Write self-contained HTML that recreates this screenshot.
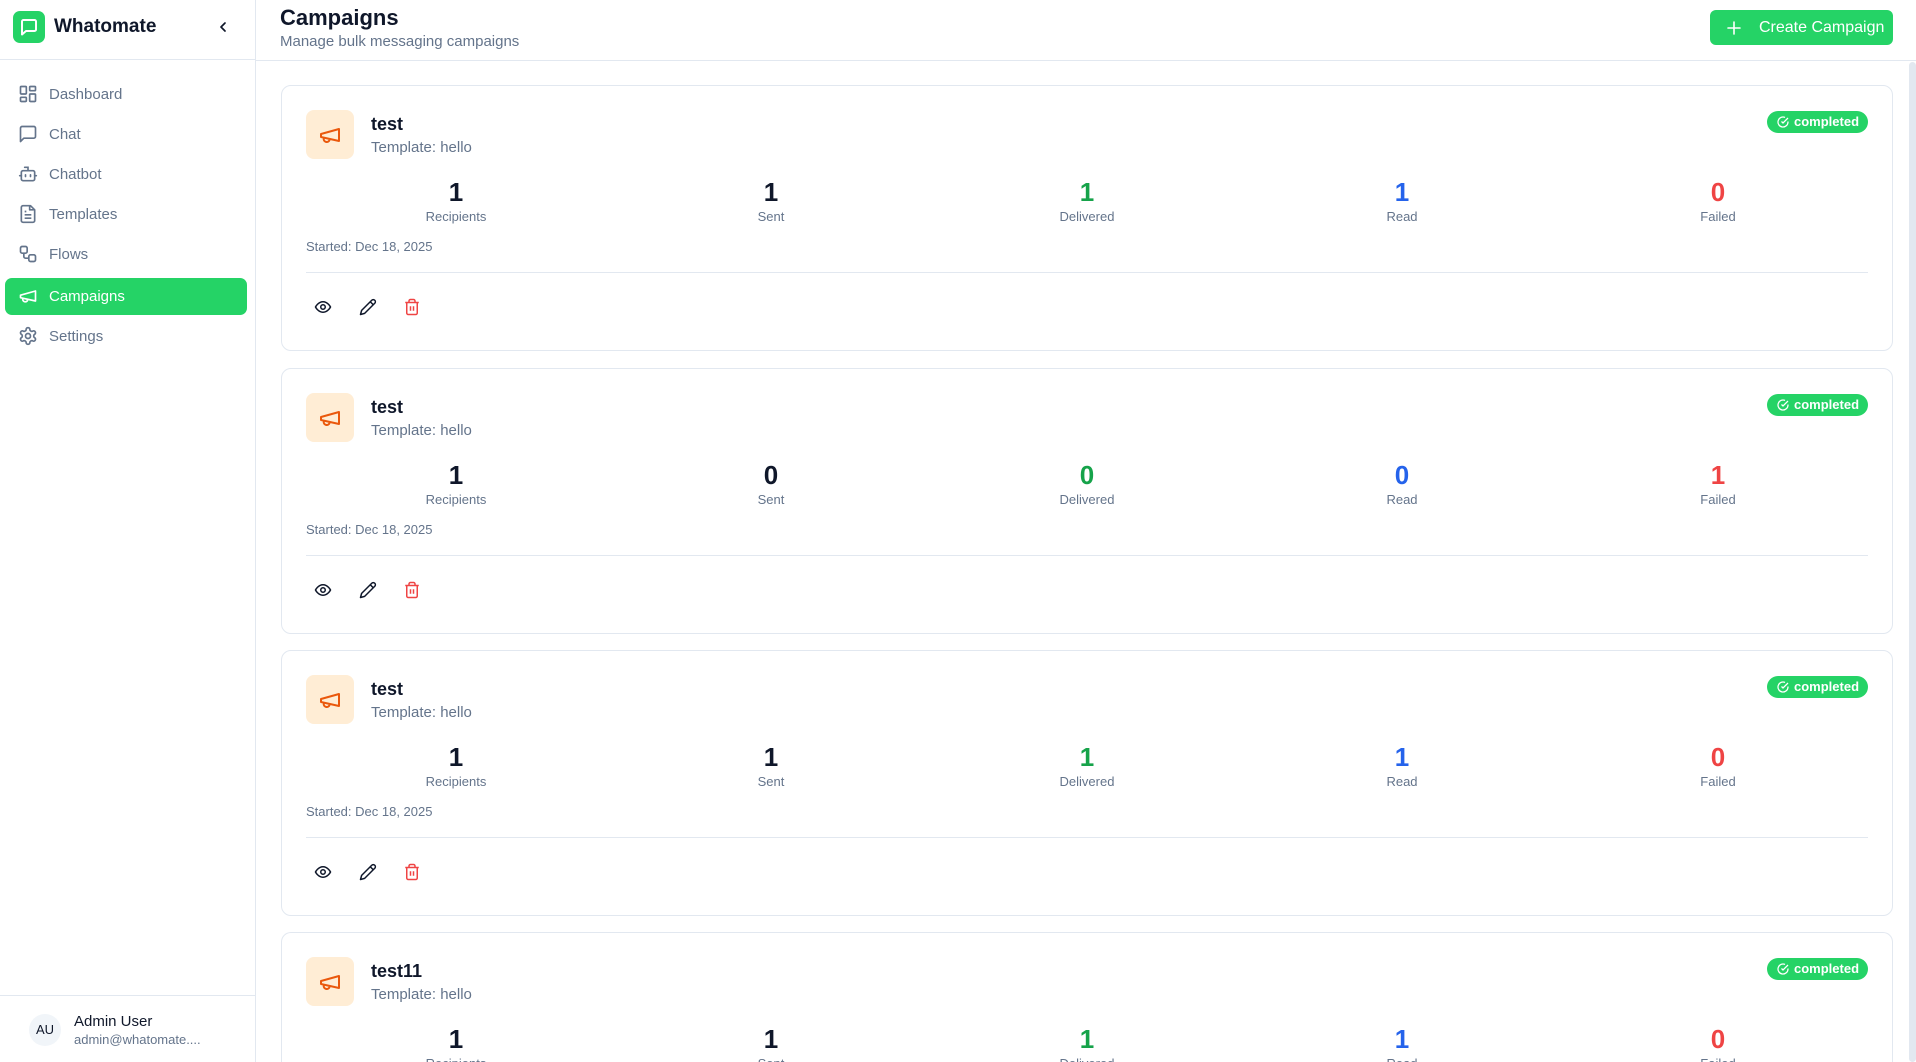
<!DOCTYPE html>
<html><head><meta charset="utf-8">
<style>
*{box-sizing:border-box;margin:0;padding:0}
html,body{width:1916px;height:1062px;overflow:hidden;background:#fff;font-family:"Liberation Sans",Arial,sans-serif;color:#0f172a}
#root{position:relative;width:1916px;height:1062px;overflow:hidden}
.abs{position:absolute}
#side{position:absolute;left:0;top:0;width:256px;height:1062px;border-right:1px solid #e2e8f0;background:#fff;z-index:2}
.nav{position:absolute;left:5px;width:242px;height:37px;border-radius:7px;color:#64748b;font-size:15px;line-height:37px;padding-left:44px}
.nav svg{position:absolute;left:13px;top:8px}
.nav.act{background:#25d366;color:#fff}
.card{position:absolute;left:281px;width:1612px;height:266px;border:1px solid #e2e8f0;border-radius:10px;background:#fff;overflow:hidden}
.ib{position:absolute;left:24px;top:24px;width:48px;height:49px;border-radius:8px;background:#ffedd5}
.ib svg{position:absolute;left:12px;top:13px}
.tt{position:absolute;left:89px;top:27px;font-size:18px;font-weight:bold;line-height:22px}
.tp{position:absolute;left:89px;top:52px;font-size:15px;color:#64748b;line-height:20px}
.badge{position:absolute;left:1485px;top:25px;width:101px;height:22px;border-radius:11px;background:#25d366;color:#fff;font-size:13px;font-weight:bold;line-height:22px;padding-left:27px}
.badge svg{position:absolute;left:10px;top:5px}
.st{position:absolute;top:89px;width:140px;text-align:center}
.st b{display:block;font-size:26px;line-height:34px}
.st span{display:block;font-size:13px;color:#64748b;line-height:15px}
.sd{position:absolute;left:24px;top:152px;font-size:13px;color:#64748b;line-height:18px}
.dv{position:absolute;left:24px;right:24px;top:186px;height:1px;background:#e2e8f0}
.ac{position:absolute;top:212px}
</style></head><body><div id="root">
<div id="side">
  <div class="abs" style="left:13px;top:11px;width:32px;height:32px;border-radius:7px;background:#25d366">
    <svg width="32" height="32" viewBox="0 0 32 32"><path d="M9 10.5a1.5 1.5 0 0 1 1.5-1.5h11a1.5 1.5 0 0 1 1.5 1.5v8a1.5 1.5 0 0 1-1.5 1.5H13l-4 3.5z" fill="none" stroke="#fff" stroke-width="2" stroke-linejoin="round"/></svg>
  </div>
  <div class="abs" style="left:54px;top:15px;font-size:19px;font-weight:bold;line-height:24px">Whatomate</div>
  <svg class="abs" style="left:216px;top:20px" width="14" height="14" viewBox="0 0 14 14"><path d="M9 3L5 7l4 4" fill="none" stroke="#0f172a" stroke-width="1.7" stroke-linecap="round" stroke-linejoin="round"/></svg>
  <div class="abs" style="left:0;top:59px;width:255px;height:1px;background:#e2e8f0"></div>

  <div class="nav" style="top:76px"><svg width="20" height="20" viewBox="0 0 24 24" fill="none" stroke="#64748b" stroke-width="2"><rect x="3" y="3" width="7" height="9" rx="1"/><rect x="14" y="3" width="7" height="5" rx="1"/><rect x="14" y="12" width="7" height="9" rx="1"/><rect x="3" y="16" width="7" height="5" rx="1"/></svg>Dashboard</div>
  <div class="nav" style="top:116px"><svg width="20" height="20" viewBox="0 0 24 24" fill="none" stroke="#64748b" stroke-width="2" stroke-linejoin="round"><path d="M21 15a2 2 0 0 1-2 2H7l-4 4V5a2 2 0 0 1 2-2h14a2 2 0 0 1 2 2z"/></svg>Chat</div>
  <div class="nav" style="top:156px"><svg width="20" height="20" viewBox="0 0 24 24" fill="none" stroke="#64748b" stroke-width="2" stroke-linecap="round"><path d="M12 8V4H8"/><rect x="4" y="8" width="16" height="12" rx="2"/><path d="M2 14h2M20 14h2M15 13v2M9 13v2"/></svg>Chatbot</div>
  <div class="nav" style="top:196px"><svg width="20" height="20" viewBox="0 0 24 24" fill="none" stroke="#64748b" stroke-width="2" stroke-linejoin="round"><path d="M15 2H6a2 2 0 0 0-2 2v16a2 2 0 0 0 2 2h12a2 2 0 0 0 2-2V7z"/><path d="M14 2v5h5M16 13H8M16 17H8M10 9H8"/></svg>Templates</div>
  <div class="nav" style="top:236px"><svg width="20" height="20" viewBox="0 0 24 24" fill="none" stroke="#64748b" stroke-width="2"><rect x="3" y="3" width="8" height="8" rx="2"/><rect x="13" y="13" width="8" height="8" rx="2"/><path d="M7 11v4a2 2 0 0 0 2 2h4"/></svg>Flows</div>
  <div class="nav act" style="top:278px"><svg width="20" height="20" viewBox="0 0 24 24" fill="none" stroke="#fff" stroke-width="2" stroke-linejoin="round"><path d="M3 11l18-5v12L3 14z"/><path d="M11.6 16.8a3 3 0 1 1-5.8-1.6"/></svg>Campaigns</div>
  <div class="nav" style="top:318px"><svg width="20" height="20" viewBox="0 0 24 24" fill="none" stroke="#64748b" stroke-width="2"><path d="M12.22 2h-.44a2 2 0 0 0-2 2v.18a2 2 0 0 1-1 1.73l-.43.25a2 2 0 0 1-2 0l-.15-.08a2 2 0 0 0-2.73.73l-.22.38a2 2 0 0 0 .73 2.73l.15.1a2 2 0 0 1 1 1.72v.51a2 2 0 0 1-1 1.74l-.15.09a2 2 0 0 0-.73 2.73l.22.38a2 2 0 0 0 2.73.73l.15-.08a2 2 0 0 1 2 0l.43.25a2 2 0 0 1 1 1.73V20a2 2 0 0 0 2 2h.44a2 2 0 0 0 2-2v-.18a2 2 0 0 1 1-1.73l.43-.25a2 2 0 0 1 2 0l.15.08a2 2 0 0 0 2.73-.73l.22-.39a2 2 0 0 0-.73-2.730l-.15-.08a2 2 0 0 1-1-1.74v-.5a2 2 0 0 1 1-1.74l.15-.09a2 2 0 0 0 .73-2.73l-.22-.38a2 2 0 0 0-2.73-.73l-.15.08a2 2 0 0 1-2 0l-.43-.25a2 2 0 0 1-1-1.73V4a2 2 0 0 0-2-2z"/><circle cx="12" cy="12" r="3"/></svg>Settings</div>

  <div class="abs" style="left:0;top:995px;width:255px;height:1px;background:#e2e8f0"></div>
  <div class="abs" style="left:29px;top:1014px;width:32px;height:32px;border-radius:50%;background:#f1f5f9;font-size:13px;text-align:center;line-height:32px">AU</div>
  <div class="abs" style="left:74px;top:1012px;font-size:15px;line-height:19px">Admin User</div>
  <div class="abs" style="left:74px;top:1032px;font-size:13px;color:#64748b;line-height:16px">admin@whatomate....</div>
</div>

<div class="abs" style="left:280px;top:5px;font-size:22px;font-weight:bold;line-height:26px">Campaigns</div>
<div class="abs" style="left:280px;top:32px;font-size:15px;color:#64748b;line-height:19px">Manage bulk messaging campaigns</div>
<div class="abs" style="left:1710px;top:10px;width:183px;height:35px;border-radius:6px;background:#25d366;color:#fff;font-size:16px;line-height:35px;padding-left:49px">Create Campaign
  <svg class="abs" style="left:17px;top:11px" width="14" height="14" viewBox="0 0 14 14"><path d="M7 1v12M1 7h12" stroke="#fff" stroke-width="1.6" stroke-linecap="round"/></svg>
</div>
<div class="abs" style="left:256px;top:60px;width:1660px;height:1px;background:#e2e8f0"></div>
<div class="abs" style="left:1909px;top:62px;width:7px;height:1000px;border-radius:4px;background:#e2e8f0"></div>

<div class="card" style="top:85px">
 <div class="ib"><svg width="24" height="24" viewBox="0 0 24 24" fill="none" stroke="#ea580c" stroke-width="2" stroke-linejoin="round"><path d="M3 11l18-5v12L3 14z"/><path d="M11.6 16.8a3 3 0 1 1-5.8-1.6"/></svg></div>
 <div class="tt">test</div><div class="tp">Template: hello</div>
 <div class="badge"><svg width="12" height="12" viewBox="0 0 24 24" fill="none" stroke="#fff" stroke-width="2.5"><path d="M22 11.1V12a10 10 0 1 1-5.9-9.1"/><path d="M9 11l3 3L22 4"/></svg>completed</div>
 <div class="st" style="left:104px"><b>1</b><span>Recipients</span></div>
 <div class="st" style="left:419px"><b>1</b><span>Sent</span></div>
 <div class="st" style="left:735px"><b style="color:#16a34a">1</b><span>Delivered</span></div>
 <div class="st" style="left:1050px"><b style="color:#2563eb">1</b><span>Read</span></div>
 <div class="st" style="left:1366px"><b style="color:#ef4444">0</b><span>Failed</span></div>
 <div class="sd">Started: Dec 18, 2025</div><div class="dv"></div>
 <svg class="ac" style="left:32px" width="18" height="18" viewBox="0 0 24 24" fill="none" stroke="#0f172a" stroke-width="2"><path d="M2 12s3.5-7 10-7 10 7 10 7-3.5 7-10 7S2 12 2 12z"/><circle cx="12" cy="12" r="3"/></svg>
 <svg class="ac" style="left:77px" width="18" height="18" viewBox="0 0 24 24" fill="none" stroke="#0f172a" stroke-width="2" stroke-linejoin="round"><path d="M17 3a2.8 2.8 0 1 1 4 4L7.5 20.5 2 22l1.5-5.5z"/><path d="M15 5l4 4"/></svg>
 <svg class="ac" style="left:121px" width="18" height="18" viewBox="0 0 24 24" fill="none" stroke="#ef4444" stroke-width="2"><path d="M3 6h18M19 6v14a2 2 0 0 1-2 2H7a2 2 0 0 1-2-2V6M8 6V4a2 2 0 0 1 2-2h4a2 2 0 0 1 2 2v2M10 11v6M14 11v6"/></svg>
</div>

<div class="card" style="top:368px">
 <div class="ib"><svg width="24" height="24" viewBox="0 0 24 24" fill="none" stroke="#ea580c" stroke-width="2" stroke-linejoin="round"><path d="M3 11l18-5v12L3 14z"/><path d="M11.6 16.8a3 3 0 1 1-5.8-1.6"/></svg></div>
 <div class="tt">test</div><div class="tp">Template: hello</div>
 <div class="badge"><svg width="12" height="12" viewBox="0 0 24 24" fill="none" stroke="#fff" stroke-width="2.5"><path d="M22 11.1V12a10 10 0 1 1-5.9-9.1"/><path d="M9 11l3 3L22 4"/></svg>completed</div>
 <div class="st" style="left:104px"><b>1</b><span>Recipients</span></div>
 <div class="st" style="left:419px"><b>0</b><span>Sent</span></div>
 <div class="st" style="left:735px"><b style="color:#16a34a">0</b><span>Delivered</span></div>
 <div class="st" style="left:1050px"><b style="color:#2563eb">0</b><span>Read</span></div>
 <div class="st" style="left:1366px"><b style="color:#ef4444">1</b><span>Failed</span></div>
 <div class="sd">Started: Dec 18, 2025</div><div class="dv"></div>
 <svg class="ac" style="left:32px" width="18" height="18" viewBox="0 0 24 24" fill="none" stroke="#0f172a" stroke-width="2"><path d="M2 12s3.5-7 10-7 10 7 10 7-3.5 7-10 7S2 12 2 12z"/><circle cx="12" cy="12" r="3"/></svg>
 <svg class="ac" style="left:77px" width="18" height="18" viewBox="0 0 24 24" fill="none" stroke="#0f172a" stroke-width="2" stroke-linejoin="round"><path d="M17 3a2.8 2.8 0 1 1 4 4L7.5 20.5 2 22l1.5-5.5z"/><path d="M15 5l4 4"/></svg>
 <svg class="ac" style="left:121px" width="18" height="18" viewBox="0 0 24 24" fill="none" stroke="#ef4444" stroke-width="2"><path d="M3 6h18M19 6v14a2 2 0 0 1-2 2H7a2 2 0 0 1-2-2V6M8 6V4a2 2 0 0 1 2-2h4a2 2 0 0 1 2 2v2M10 11v6M14 11v6"/></svg>
</div>

<div class="card" style="top:650px">
 <div class="ib"><svg width="24" height="24" viewBox="0 0 24 24" fill="none" stroke="#ea580c" stroke-width="2" stroke-linejoin="round"><path d="M3 11l18-5v12L3 14z"/><path d="M11.6 16.8a3 3 0 1 1-5.8-1.6"/></svg></div>
 <div class="tt">test</div><div class="tp">Template: hello</div>
 <div class="badge"><svg width="12" height="12" viewBox="0 0 24 24" fill="none" stroke="#fff" stroke-width="2.5"><path d="M22 11.1V12a10 10 0 1 1-5.9-9.1"/><path d="M9 11l3 3L22 4"/></svg>completed</div>
 <div class="st" style="left:104px"><b>1</b><span>Recipients</span></div>
 <div class="st" style="left:419px"><b>1</b><span>Sent</span></div>
 <div class="st" style="left:735px"><b style="color:#16a34a">1</b><span>Delivered</span></div>
 <div class="st" style="left:1050px"><b style="color:#2563eb">1</b><span>Read</span></div>
 <div class="st" style="left:1366px"><b style="color:#ef4444">0</b><span>Failed</span></div>
 <div class="sd">Started: Dec 18, 2025</div><div class="dv"></div>
 <svg class="ac" style="left:32px" width="18" height="18" viewBox="0 0 24 24" fill="none" stroke="#0f172a" stroke-width="2"><path d="M2 12s3.5-7 10-7 10 7 10 7-3.5 7-10 7S2 12 2 12z"/><circle cx="12" cy="12" r="3"/></svg>
 <svg class="ac" style="left:77px" width="18" height="18" viewBox="0 0 24 24" fill="none" stroke="#0f172a" stroke-width="2" stroke-linejoin="round"><path d="M17 3a2.8 2.8 0 1 1 4 4L7.5 20.5 2 22l1.5-5.5z"/><path d="M15 5l4 4"/></svg>
 <svg class="ac" style="left:121px" width="18" height="18" viewBox="0 0 24 24" fill="none" stroke="#ef4444" stroke-width="2"><path d="M3 6h18M19 6v14a2 2 0 0 1-2 2H7a2 2 0 0 1-2-2V6M8 6V4a2 2 0 0 1 2-2h4a2 2 0 0 1 2 2v2M10 11v6M14 11v6"/></svg>
</div>

<div class="card" style="top:932px;height:130px;border-bottom:none;border-radius:10px 10px 0 0">
 <div class="ib"><svg width="24" height="24" viewBox="0 0 24 24" fill="none" stroke="#ea580c" stroke-width="2" stroke-linejoin="round"><path d="M3 11l18-5v12L3 14z"/><path d="M11.6 16.8a3 3 0 1 1-5.8-1.6"/></svg></div>
 <div class="tt">test11</div><div class="tp">Template: hello</div>
 <div class="badge"><svg width="12" height="12" viewBox="0 0 24 24" fill="none" stroke="#fff" stroke-width="2.5"><path d="M22 11.1V12a10 10 0 1 1-5.9-9.1"/><path d="M9 11l3 3L22 4"/></svg>completed</div>
 <div class="st" style="left:104px"><b>1</b><span>Recipients</span></div>
 <div class="st" style="left:419px"><b>1</b><span>Sent</span></div>
 <div class="st" style="left:735px"><b style="color:#16a34a">1</b><span>Delivered</span></div>
 <div class="st" style="left:1050px"><b style="color:#2563eb">1</b><span>Read</span></div>
 <div class="st" style="left:1366px"><b style="color:#ef4444">0</b><span>Failed</span></div>
</div>
</div></body></html>
